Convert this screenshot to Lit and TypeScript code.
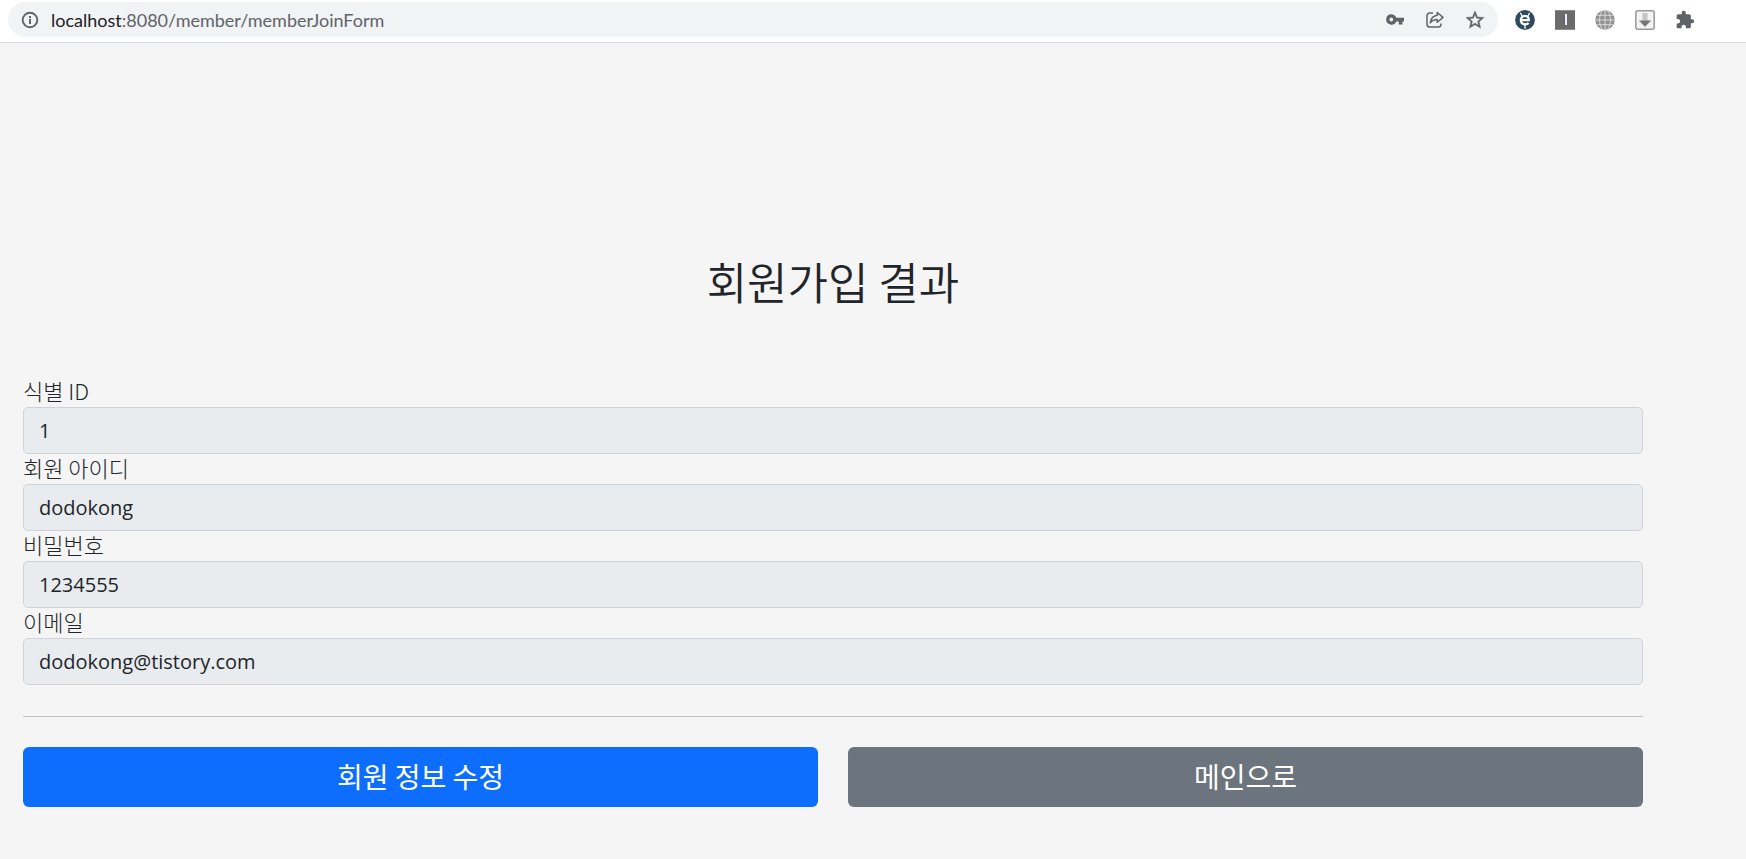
import { LitElement, html, css, svg } from "lit";
import { customElement, property } from "lit/decorators.js";

const infoIcon = svg`<svg viewBox="0 0 18 18" width="18" height="18" aria-hidden="true">
  <circle cx="9" cy="9" r="7.3" fill="none" stroke="#5f6368" stroke-width="1.9"/>
  <path d="M8 8h2v5H8zM8 5h2v2H8z" fill="#5f6368"/></svg>`;

const keyIcon = svg`<svg viewBox="0 0 20 20" width="20" height="20" aria-hidden="true">
  <path fill="#5f6368" fill-rule="evenodd" d="M6.3 4.200a5.200 5.200 0 0 1 4.900 3.500H19v3.700h-1.500v3h-3.700v-3h-2.600A5.200 5.200 0 1 1 6.300 4.200zm0 3.400a1.900 1.900 0 1 0 0 3.800 1.900 1.900 0 0 0 0-3.800z"/></svg>`;

const shareIcon = svg`<svg viewBox="0 0 20 20" width="20" height="20" fill="none" stroke="#5f6368" stroke-width="1.5" stroke-linejoin="round" aria-hidden="true">
  <path d="M8 3H4.800A2.800 2.800 0 0 0 2 5.800v8.400A2.800 2.800 0 0 0 4.800 17h8.400a2.800 2.800 0 0 0 2.800-2.800V13.500"/>
  <path d="M12.200 2.500l5.800 4.900-5.800 4.900V9.600c-3.300 0-5.300 1-6.900 3.200.4-3.700 2.500-6.800 6.900-7.500z"/></svg>`;

const starIcon = svg`<svg viewBox="0 0 24 24" width="22" height="22" aria-hidden="true">
  <path fill="#5f6368" stroke="#5f6368" stroke-width=".4" d="M22 9.240l-7.190-.62L12 2 9.190 8.630 2 9.240l5.460 4.730L5.820 21 12 17.270 18.180 21l-1.630-7.030L22 9.240zM12 15.400l-3.760 2.270 1-4.280-3.320-2.880 4.380-.38L12 6.100l1.710 4.040 4.380.38-3.320 2.880 1 4.280L12 15.400z"/></svg>`;

const orbitIcon = svg`<svg viewBox="0 0 20 20" width="20" height="20" aria-hidden="true">
  <circle cx="10" cy="10" r="9.900" fill="#2f4a5c"/>
  <path d="M5.600 3.200l1.600 3M14.400 3.200l-1.600 3M10 14.500v3.800" fill="none" stroke="#fff" stroke-width="1.300" stroke-linecap="round"/>
  <path d="M6.500 10.200h7.300c.1-2.600-1.500-4.300-3.800-4.300a4.100 4.100 0 0 0-4.200 4.200c0 2.500 1.800 4.200 4.300 4.200 1.500 0 2.700-.5 3.500-1.400" fill="none" stroke="#fff" stroke-width="2.200"/></svg>`;

const barIcon = svg`<svg viewBox="0 0 20 20" width="20" height="20" aria-hidden="true">
  <path fill="#6b6b6b" d="M0 0h20v20H0z"/><path fill="#8d8d8d" d="M0 0h20v1H0zM0 19h20v1H0z"/>
  <path fill="#4f5f94" d="M9 5h1v10H9z"/><path fill="#f6eeee" d="M10 4h2v11h-2z"/></svg>`;

const globeIcon = svg`<svg viewBox="0 0 20 20" width="20" height="20" aria-hidden="true">
  <circle cx="10" cy="10" r="9.800" fill="#929292"/>
  <path d="M10 0v20M0 10h20M1.500 5.300h17M1.500 14.700h17" stroke="#d8d8d8" stroke-width="1"/>
  <path d="M7.500.5c-4 5.500-4 13.500 0 19M12.500.5c4 5.500 4 13.500 0 19" fill="none" stroke="#d8d8d8" stroke-width="1"/></svg>`;

const downloadIcon = svg`<svg viewBox="0 0 20 20" width="20" height="20" aria-hidden="true">
  <rect x=".8" y=".8" width="18.400" height="18.400" rx="2" fill="#f3f3f3" stroke="#999" stroke-width="1.500"/>
  <path fill="#c4c4c4" d="M7.500 3h5v8h-5z"/><path fill="#777" d="M3.800 10.500h12.400L10 16.700z"/></svg>`;

const puzzleIcon = svg`<svg viewBox="0 0 24 24" width="20" height="20" aria-hidden="true">
  <path fill="#5f6368" d="M20.500 11H19V7c0-1.100-.9-2-2-2h-4V3.500a2.500 2.500 0 0 0-5 0V5H4c-1.100 0-1.990.9-1.990 2v3.800H3.500c1.490 0 2.700 1.210 2.700 2.700s-1.210 2.700-2.700 2.700H2V20c0 1.100.9 2 2 2h3.800v-1.500c0-1.490 1.210-2.700 2.700-2.700 1.490 0 2.700 1.210 2.700 2.700V22H17c1.100 0 2-.9 2-2v-4h1.500a2.500 2.500 0 0 0 0-5z"/></svg>`;

@customElement("browser-bar")
class BrowserBar extends LitElement {
  static styles = css`
    :host {
      display: flex;
      align-items: center;
      gap: 17px;
      box-sizing: border-box;
      padding: 2px 51px 5px 8px;
      background: #fff;
      border-bottom: 1px solid #dadce0;
    }
    .address {
      flex: 1;
      min-width: 0;
      display: flex;
      align-items: center;
      gap: 12px;
      height: 35px;
      padding: 0 13px;
      border-radius: 18px;
      background: #f1f3f4;
    }
    .url {
      flex: 1;
      min-width: 0;
      overflow: hidden;
      white-space: nowrap;
      font: 400 18px/24px Lato, "Noto Sans", sans-serif;
      color: #5f6368;
    }
    .host {
      color: #202124;
    }
    .icons {
      display: flex;
      gap: 20px;
    }
    .icon {
      display: flex;
      align-items: center;
      justify-content: center;
      width: 20px;
      height: 20px;
      padding: 0;
      border: 0;
      background: none;
    }
    .icon svg {
      flex: none;
    }
    .info {
      width: 18px;
    }
  `;

  private button(label: string, icon: unknown) {
    return html`<button class="icon" type="button" aria-label=${label}>${icon}</button>`;
  }

  render() {
    return html`
      <div class="address">
        <button class="icon info" type="button" aria-label="Site information">${infoIcon}</button>
        <span class="url"><span class="host">localhost</span>:8080/member/memberJoinForm</span>
        <div class="icons">
          ${this.button("Passwords", keyIcon)} ${this.button("Share", shareIcon)}
          ${this.button("Bookmark", starIcon)}
        </div>
      </div>
      <div class="icons">
        ${this.button("Extension e", orbitIcon)} ${this.button("Extension I", barIcon)}
        ${this.button("Language", globeIcon)} ${this.button("Download", downloadIcon)}
        ${this.button("Extensions", puzzleIcon)}
      </div>
    `;
  }
}

@customElement("readonly-field")
class ReadonlyField extends LitElement {
  @property() label = "";
  @property() value = "";

  static styles = css`
    :host {
      display: block;
      color: #212529;
    }
    .label {
      display: block;
      padding-bottom: 4px;
      font: 300 22px/26px "Noto Sans CJK KR", sans-serif;
    }
    .control {
      display: block;
      box-sizing: border-box;
      width: 100%;
      height: 47px;
      margin: 0;
      padding: 0 15px;
      border: 1px solid #ced4da;
      border-radius: 5px;
      background: #e9ecef;
      color: inherit;
      font: 400 20px/30px "Open Sans", "Noto Sans CJK KR", sans-serif;
    }
  `;

  render() {
    return html`
      <label class="label" for="control">${this.label}</label>
      <input class="control" id="control" type="text" .value=${this.value} readonly />
    `;
  }
}

@customElement("app-root")
class AppRoot extends LitElement {
  private fields = [
    { label: "식별 ID", value: "1" },
    { label: "회원 아이디", value: "dodokong" },
    { label: "비밀번호", value: "1234555" },
    { label: "이메일", value: "dodokong@tistory.com" },
  ];

  static styles = css`
    :host {
      display: block;
      min-height: 100vh;
      background: #f5f5f5;
      color: #212529;
      font-family: "Noto Sans CJK KR", sans-serif;
    }
    .content {
      padding: 208px 103px 52px 23px;
    }
    .title {
      margin: 0 0 66px;
      text-align: center;
      font-size: 44px;
      line-height: 60px;
      font-weight: 350;
    }
    .rule {
      height: 1px;
      margin: 31px 0 30px;
      border: 0;
      background: #c0c0c0;
    }
    .actions {
      display: grid;
      grid-template-columns: 1fr 1fr;
      gap: 30px;
    }
    .action {
      height: 60px;
      padding: 0 20px 2px;
      border: 0;
      border-radius: 6px;
      color: #fff;
      font: 400 28px/38px "Noto Sans CJK KR", sans-serif;
    }
    .primary {
      background: #0d6efd;
    }
    .secondary {
      background: #6c757d;
    }
  `;

  render() {
    return html`
      <browser-bar></browser-bar>
      <main class="content">
        <h1 class="title">회원가입 결과</h1>
        ${this.fields.map(
          (f) => html`<readonly-field .label=${f.label} .value=${f.value}></readonly-field>`
        )}
        <hr class="rule" />
        <div class="actions">
          <button class="action primary" type="button">회원 정보 수정</button>
          <button class="action secondary" type="button">메인으로</button>
        </div>
      </main>
    `;
  }
}
